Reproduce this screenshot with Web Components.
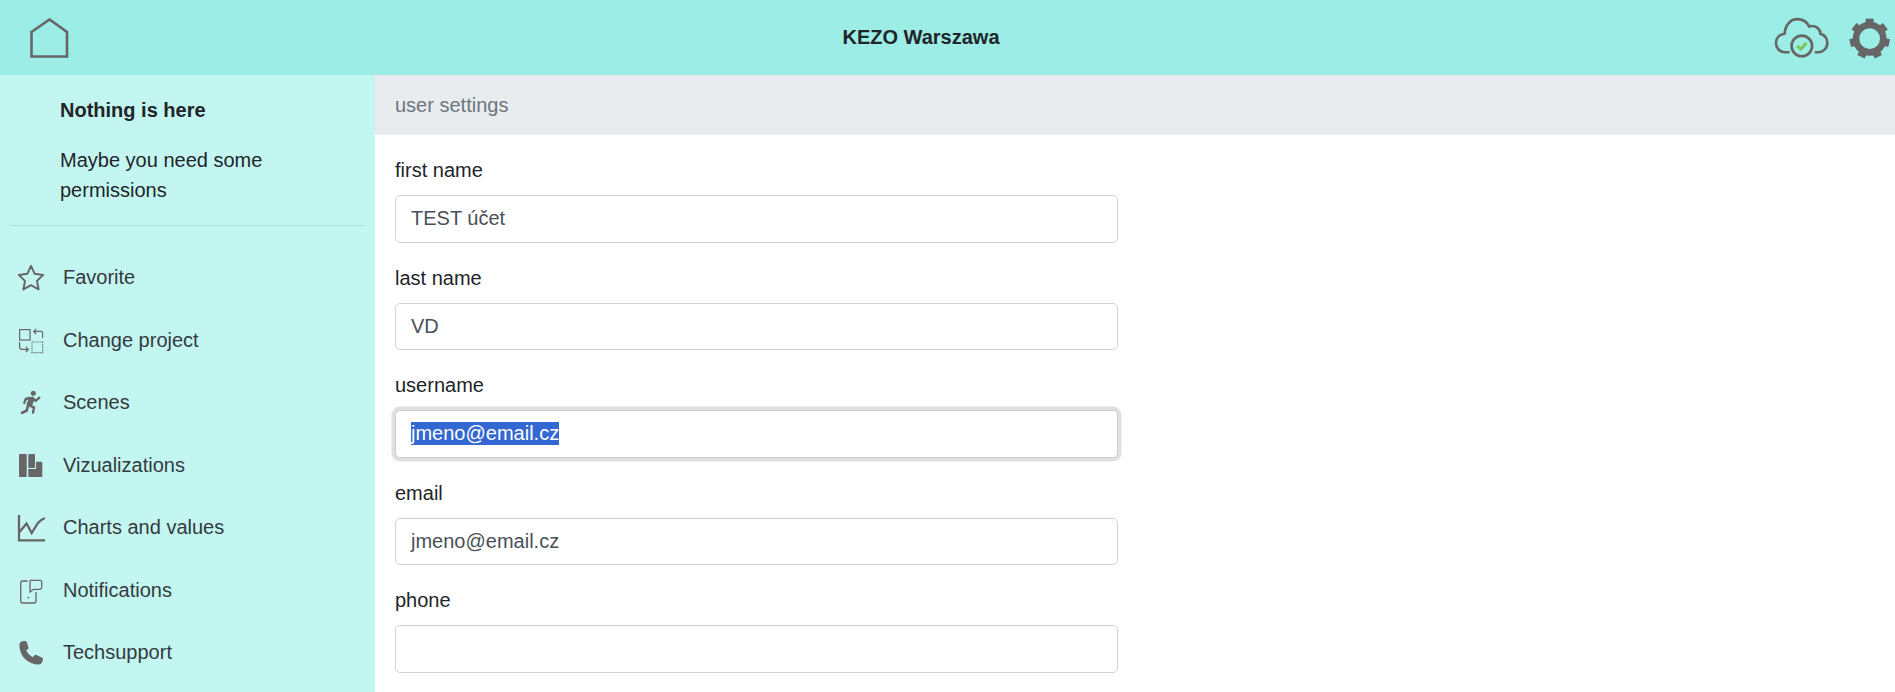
<!DOCTYPE html>
<html lang="en">
<head>
<meta charset="utf-8">
<title>KEZO Warszawa</title>
<style>
  html, body { margin: 0; height: 100%; overflow: hidden; }
  body { font-family: "Liberation Sans", Arial, sans-serif; color: #212529; }
  svg { display: block; }
</style>
</head>
<body>
<kz-page>
  <kz-header slot="header" title="KEZO Warszawa">
    <svg slot="left" width="39" height="40" viewBox="0 0 39 40" fill="none" stroke="#666" stroke-width="2.6">
      <path d="M1.5 14 L19.5 1.5 L37 14 V38.5 H1.5 Z"/>
    </svg>
    <svg slot="right" width="58" height="44" viewBox="100 40 175 132" fill="none" stroke="#666" stroke-width="8">
      <path d="M150 149 H136 C120 149 109 136 109 121 C109 106 120 95 135 93 C137 66 153 49 173 49 C190 49 203 58 209 71 C228 66 243 78 243 93 C256 97 264 108 264 121 C264 137 251 149 236 149 H226"/>
      <circle cx="187" cy="130" r="31"/>
      <path d="M173 130 L184 139 L201 121" stroke="#7cc653" stroke-width="9"/>
    </svg>
    <svg slot="right" width="45" height="42" viewBox="320 40 135 126" fill="#666">
      <circle cx="388" cy="105" r="41" fill="none" stroke="#666" stroke-width="20"/>
      <g id="teeth">
        <rect x="376" y="45" width="24" height="18"/>
        <rect x="376" y="45" width="24" height="18" transform="rotate(51.43 388 105)"/>
        <rect x="376" y="45" width="24" height="18" transform="rotate(102.86 388 105)"/>
        <rect x="376" y="45" width="24" height="18" transform="rotate(154.29 388 105)"/>
        <rect x="376" y="45" width="24" height="18" transform="rotate(205.71 388 105)"/>
        <rect x="376" y="45" width="24" height="18" transform="rotate(257.14 388 105)"/>
        <rect x="376" y="45" width="24" height="18" transform="rotate(308.57 388 105)"/>
      </g>
    </svg>
  </kz-header>

  <kz-sidebar slot="side">
    <b slot="intro">Nothing is here</b>
    <span slot="intro">Maybe you need some permissions</span>

    <kz-nav-item>
      <svg slot="icon" width="28" height="28" viewBox="0 0 28 28" fill="none" stroke="#666" stroke-width="2" stroke-linejoin="round">
        <path d="M14 1.8 L17.7 9.8 L26.2 10.9 L20 16.9 L21.6 25.4 L14 21.2 L6.4 25.4 L8 16.9 L1.8 10.9 L10.3 9.8 Z"/>
      </svg>
      Favorite
    </kz-nav-item>
    <kz-nav-item>
      <svg slot="icon" width="28" height="28" viewBox="0 0 28 28" fill="none" stroke="#666" stroke-width="1.2">
        <rect x="2.6" y="2.6" width="10.4" height="10.4"/>
        <rect x="15" y="15" width="10.6" height="10.6" stroke-dasharray="1.1 1"/>
        <path d="M25.6 11 V6 Q25.6 4.4 24 4.4 H17"/>
        <path d="M19.3 1.8 L16.7 4.4 L19.3 7"/>
        <path d="M2.6 15 V20 Q2.6 22.4 5 22.4 H11"/>
        <path d="M8.8 19.8 L11.4 22.4 L8.8 25"/>
      </svg>
      Change project
    </kz-nav-item>
    <kz-nav-item>
      <svg slot="icon" width="28" height="28" viewBox="0 0 84 84" fill="none" stroke="#666" stroke-width="7" stroke-linecap="round" stroke-linejoin="round">
        <circle cx="49" cy="13" r="7.5" fill="#666" stroke="none"/>
        <path d="M45 26 L36 50" stroke-width="17" stroke-linecap="butt"/>
        <path d="M46 26 L56 36 L67 26"/>
        <path d="M38 27 L26 30 L22 42"/>
        <path d="M38 50 L51 55 L48 71"/>
        <path d="M33 50 L29 65 L15 71" stroke-width="8"/>
      </svg>
      Scenes
    </kz-nav-item>
    <kz-nav-item>
      <svg slot="icon" width="28" height="28" viewBox="0 0 28 28" fill="#666">
        <rect x="2" y="2" width="7.7" height="23" rx="1"/>
        <rect x="11.3" y="2" width="6.7" height="14" rx="1"/>
        <path d="M11.3 17 H19 V9.7 H24.3 Q25.3 9.7 25.3 10.7 V24 Q25.3 25 24.3 25 H12.3 Q11.3 25 11.3 24 Z"/>
      </svg>
      Vizualizations
    </kz-nav-item>
    <kz-nav-item>
      <svg slot="icon" width="28" height="28" viewBox="0 0 28 28" fill="none" stroke="#666" stroke-width="2.3">
        <path d="M2 1 V26.4 H28"/>
        <path d="M2.5 18 L9.5 9.5 L14.7 19 L21 9 Q23 6 28 4"/>
      </svg>
      Charts and values
    </kz-nav-item>
    <kz-nav-item>
      <svg slot="icon" width="28" height="28" viewBox="0 0 28 28" fill="none" stroke="#666" stroke-width="1.3">
        <path d="M10.5 4 H5.5 Q3.7 4 3.7 6 V24 Q3.7 26 5.5 26 H17 Q19 26 19 24 V15"/>
        <path d="M13.8 3.3 H23 Q24.7 3.3 24.7 5 V10.5 Q24.7 12.3 23 12.3 H16.5 L13 15 V4 Q13 3.3 13.8 3.3 Z"/>
        <circle cx="11.3" cy="20.6" r="0.9" fill="#666" stroke="none"/>
      </svg>
      Notifications
    </kz-nav-item>
    <kz-nav-item>
      <svg slot="icon" width="28" height="28" viewBox="0 0 28 28" fill="#666">
        <path d="M2.4 5 Q3 2.4 6 2 L8 2 Q9.4 2.1 9.9 3.6 L11.4 8.2 Q11.6 9.4 10.8 10.2 L9.2 11.6 Q11 15.6 15.6 18.2 L17.4 16.4 Q18.2 15.6 19.4 16 L24.8 18.4 Q26.2 19 26 20.6 L25.2 23 Q24.2 25.6 21.6 25.6 Q13.6 25.6 7.8 19.8 Q2 13.8 2.4 5 Z"/>
      </svg>
      Techsupport
    </kz-nav-item>
  </kz-sidebar>

  <kz-settings slot="main" heading="user settings">
    <kz-field label="first name" value="TEST účet"></kz-field>
    <kz-field label="last name" value="VD"></kz-field>
    <kz-field label="username" value="jmeno@email.cz" focused></kz-field>
    <kz-field label="email" value="jmeno@email.cz"></kz-field>
    <kz-field label="phone" value=""></kz-field>
  </kz-settings>
</kz-page>

<script>
class KzPage extends HTMLElement {
  constructor() {
    super();
    this.attachShadow({ mode: 'open' }).innerHTML = `
      <style>
        :host {
          display: grid;
          grid-template-columns: 375px 1fr;
          grid-template-rows: 75px 1fr;
          height: 692px;
          overflow: hidden;
        }
        .top { grid-column: 1 / 3; }
      </style>
      <div class="top"><slot name="header"></slot></div>
      <slot name="side"></slot>
      <slot name="main"></slot>`;
  }
}

class KzHeader extends HTMLElement {
  constructor() {
    super();
    this.attachShadow({ mode: 'open' }).innerHTML = `
      <style>
        :host {
          display: flex;
          align-items: center;
          justify-content: space-between;
          height: 75px;
          padding: 0 3px 0 30px;
          box-sizing: border-box;
          background: #9bede5;
        }
        h1 { margin: 0; font-size: 20px; font-weight: 700; color: #212529; }
        .right { display: flex; align-items: center; gap: 16px; }
      </style>
      <div><slot name="left"></slot></div>
      <h1></h1>
      <div class="right"><slot name="right"></slot></div>`;
    this.shadowRoot.querySelector('h1').textContent = this.getAttribute('title');
  }
}

class KzSidebar extends HTMLElement {
  constructor() {
    super();
    this.attachShadow({ mode: 'open' }).innerHTML = `
      <style>
        :host {
          display: block;
          background: #c3f6f0;
          font-size: 20px;
          line-height: 30px;
          overflow: hidden;
        }
        .intro {
          display: flex;
          flex-direction: column;
          gap: 20px;
          padding: 20px 60px 20px;
          color: #212529;
        }
        hr { margin: 0 10px 21px; border: 0; border-top: 1px solid #b2dcd9; }
      </style>
      <div class="intro"><slot name="intro"></slot></div>
      <hr>
      <slot></slot>`;
  }
}

class KzNavItem extends HTMLElement {
  constructor() {
    super();
    this.attachShadow({ mode: 'open' }).innerHTML = `
      <style>
        :host {
          display: flex;
          align-items: center;
          gap: 18px;
          height: 62.5px;
          padding-left: 17px;
          color: #343a40;
          font-size: 20px;
        }
        .text { padding-bottom: 2px; }
      </style>
      <slot name="icon"></slot>
      <div class="text"><slot></slot></div>`;
  }
}

class KzSettings extends HTMLElement {
  constructor() {
    super();
    this.attachShadow({ mode: 'open' }).innerHTML = `
      <style>
        :host { display: block; background: #fff; overflow: hidden; }
        .crumb {
          height: 60px;
          display: flex;
          align-items: center;
          padding: 0 20px;
          background: #e9ecef;
          color: #6c757d;
          font-size: 20px;
        }
        form { width: 723px; padding: 20px 20px 0; }
      </style>
      <div class="crumb"></div>
      <form><slot></slot></form>`;
    this.shadowRoot.querySelector('.crumb').textContent = this.getAttribute('heading');
  }
}

class KzField extends HTMLElement {
  constructor() {
    super();
    this.attachShadow({ mode: 'open' }).innerHTML = `
      <style>
        :host { display: block; margin-bottom: 20px; font-size: 20px; }
        label { display: block; line-height: 30px; margin-bottom: 10px; color: #212529; }
        .box {
          box-sizing: border-box;
          height: 47.5px;
          padding: 0 15px;
          display: flex;
          align-items: center;
          background: #fff;
          border: 1px solid #ced4da;
          border-radius: 5px;
          color: #495057;
          white-space: pre;
        }
        :host([focused]) .box { box-shadow: 0 0 0 3.5px #e0e0e0; border-color: #cfcfcf; }
        :host([focused]) span { background: #3367d1; color: #fff; line-height: 23px; }
      </style>
      <label></label>
      <div class="box"><span></span></div>`;
    this.shadowRoot.querySelector('label').textContent = this.getAttribute('label');
    this.shadowRoot.querySelector('span').textContent = this.getAttribute('value');
  }
}

customElements.define('kz-page', KzPage);
customElements.define('kz-header', KzHeader);
customElements.define('kz-sidebar', KzSidebar);
customElements.define('kz-nav-item', KzNavItem);
customElements.define('kz-settings', KzSettings);
customElements.define('kz-field', KzField);
</script>
</body>
</html>
